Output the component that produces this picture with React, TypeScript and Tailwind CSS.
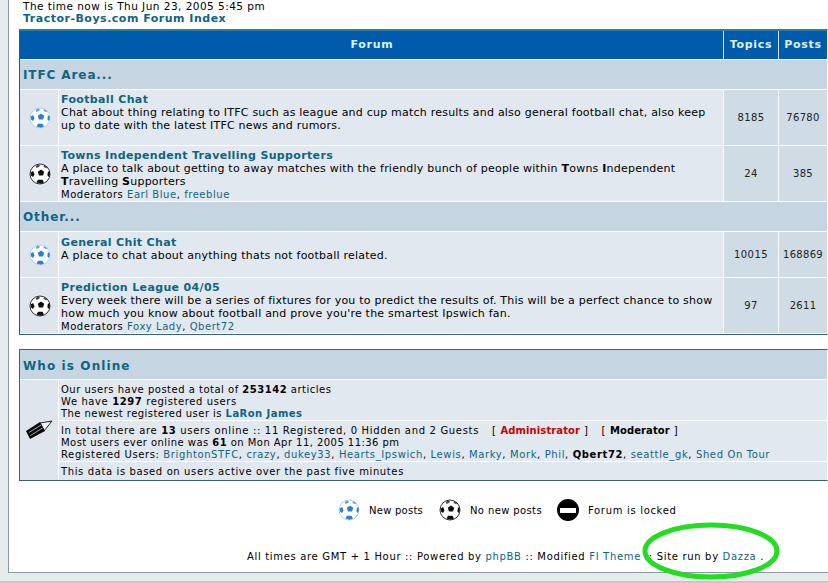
import React from "react";

const teal = "text-[#0e6583]";

function Ball({ blue = false }: { blue?: boolean }) {
  const c = blue ? "#2f80cc" : "#0c0c0c";
  return (
    <svg width="22" height="22" viewBox="0 0 22 22">
      <circle cx="11" cy="11" r="10" fill="#fff" stroke={blue ? "#b4d4ee" : "#333"} strokeWidth="1" />
      <path d="M12 6.500l3.200 2.300-1.200 3.800h-4l-1.200-3.800z" fill={c} />
      <path d="M8.500 1.600l2.500 0.600-1 1.800-2.600 1-0.600-1.800z" fill={c} opacity="0.75" />
      <path d="M15 2l3 2.200-0.500 1-3-1.200z" fill={c} opacity="0.75" />
      <path d="M1.600 9.500l2.600-1.500 1.300 3.500-1.500 2.500-2-1.500z" fill={c} />
      <path d="M20.600 9l-1.600-0.800-0.600 3.800 1 2 1.400-2z" fill={c} />
      <path d="M7.500 19.500l1.500-2.700h4.500l1.500 2.700-3.500 1.300z" fill={c} />
    </svg>
  );
}

function Pencil() {
  return (
    <svg width="28" height="20" viewBox="0 0 28 20">
      <path d="M15 3L27 1l-8 10z" fill="#f2f5f7" stroke="#222" strokeWidth="1" />
      <path d="M1 11L15 2l5 9-15 8z" fill="#0a0a0a" />
      <path d="M4 12.500l12-7.500M5.500 15.500l12-7.500" stroke="#dfe6ec" strokeWidth="0.700" />
    </svg>
  );
}

function A({ children }: { children: React.ReactNode }) {
  return <span className={teal}>{children}</span>;
}

function ForumRow({
  blue,
  title,
  h,
  pad = "pt-[3px]",
  topics,
  posts,
  children,
}: {
  blue?: boolean;
  title: string;
  h: string;
  pad?: string;
  topics: string;
  posts: string;
  children: React.ReactNode;
}) {
  return (
    <div className={`flex ${h} border-b border-white`}>
      <div className="w-[39px] flex items-center justify-center bg-[#dee5ec] border-r border-white shrink-0 pl-px">
        <Ball blue={blue} />
      </div>
      <div className={`w-[665px] shrink-0 bg-[#e2e8ef] border-r border-white pl-[2px] pr-[5px] ${pad} leading-[13px] tracking-[0.22px]`}>
        <div className={`font-bold text-[11px] tracking-[0.35px] ${teal} leading-[13px]`}>{title}</div>
        {children}
      </div>
      <div className="w-[55px] shrink-0 bg-[#cfdbe5] border-r border-white flex items-center justify-center text-[10px] tracking-[0.4px] text-[#222]">
        {topics}
      </div>
      <div className="flex-1 bg-[#cfdbe5] flex items-center justify-center text-[10px] tracking-[0.3px] text-[#222]">
        {posts}
      </div>
    </div>
  );
}

function Category({ label }: { label: string }) {
  return (
    <div className={`h-[30px] bg-[#c5d5e2] border-b border-white flex items-center pl-[3px] font-bold text-[12px] tracking-[0.9px] ${teal}`}>
      {label}
    </div>
  );
}

export default function App() {
  return (
    <div className="relative w-[828px] h-[583px] overflow-hidden bg-[#e6ecee] text-[11px] text-black font-['DejaVu_Sans',Verdana,sans-serif]">
      <div className="ml-2 h-[573px] bg-white border-l border-b border-[#8a9ba3] pl-[10px]">
        <div className="pl-[4px] text-[10.500px] tracking-[0.47px] leading-[13px]">
          The time now is Thu Jun 23, 2005 5:45 pm
        </div>
        <div className={`pl-[4px] font-bold text-[11px] tracking-[0.5px] leading-[12px] ${teal}`}>
          Tractor-Boys.com Forum Index
        </div>

        <div className="mt-[4px] border border-[#0e6583] border-t-[2px] border-t-[#2a7f9f] border-b-[#35617a] border-r-white w-[809px]">
          <div className="flex h-[29px] bg-[#005bac] border-b border-white font-bold text-[11px] tracking-[0.7px] text-[#ddf0f8]">
            <div className="w-[704px] shrink-0 border-r border-[#cfe7f0] flex items-center justify-center pl-px">Forum</div>
            <div className="w-[55px] shrink-0 border-r border-[#cfe7f0] flex items-center justify-center">Topics</div>
            <div className="flex-1 flex items-center justify-center">Posts</div>
          </div>
          <Category label="ITFC Area..." />
          <ForumRow blue title="Football Chat" h="h-[56px]" topics="8185" posts="76780">
            <div>Chat about thing relating to ITFC such as league and cup match results and also general football chat, also keep up to date with the latest ITFC news and rumors.</div>
          </ForumRow>
          <ForumRow title="Towns Independent Travelling Supporters" h="h-[56px]" topics="24" posts="385">
            <div>
              A place to talk about getting to away matches with the friendly bunch of people within <b>T</b>owns <b>I</b>ndependent <b>T</b>ravelling <b>S</b>upporters
            </div>
            <div className="text-[10px] tracking-[0.55px]">
              Moderators <A>Earl Blue</A>, <A>freeblue</A>
            </div>
          </ForumRow>
          <Category label="Other..." />
          <ForumRow blue title="General Chit Chat" h="h-[46px]" pad="pt-[4px]" topics="10015" posts="168869">
            <div>A place to chat about anything thats not football related.</div>
          </ForumRow>
          <ForumRow title="Prediction League 04/05" h="h-[56px]" topics="97" posts="2611">
            <div>Every week there will be a series of fixtures for you to predict the results of. This will be a perfect chance to show how much you know about football and prove you're the smartest Ipswich fan.</div>
            <div className="text-[10px] tracking-[0.55px]">
              Moderators <A>Foxy Lady</A>, <A>Qbert72</A>
            </div>
          </ForumRow>
        </div>

        <div className="mt-[14px] border border-[#35617a] border-r-white w-[809px]">
          <div className={`h-[30px] bg-[#c5d5e2] border-b border-white flex items-center pl-[3px] pt-[2px] font-bold text-[12px] tracking-[1.100px] ${teal}`}>
            Who is Online
          </div>
          <div className="flex bg-[#e2e8ef] text-[10px] tracking-[0.45px] leading-[12px]">
            <div className="w-[39px] shrink-0 bg-[#dee5ec] border-r border-white flex items-center justify-center">
              <Pencil />
            </div>
            <div className="flex-1">
              <div className="h-[41px] pl-[2px] pt-[4px] border-b border-white">
                <div className="tracking-[0.5px]">Our users have posted a total of <b>253142</b> articles</div>
                <div className="tracking-[0.6px]">We have <b>1297</b> registered users</div>
                <div>The newest registered user is <b className={teal}>LaRon James</b></div>
              </div>
              <div className="h-[41px] pl-[2px] pt-[4px] border-b border-white whitespace-nowrap">
                <div className="tracking-[0.67px]">
                  In total there are <b>13</b> users online :: 11 Registered, 0 Hidden and 2 Guests
                  <span className="ml-[13px]">[ <b className="text-[#cc0000] tracking-[0.1px]">Administrator</b> ]</span>
                  <span className="ml-[13px]">[ <b className="tracking-[0.1px]">Moderator</b> ]</span>
                </div>
                <div>Most users ever online was <b>61</b> on Mon Apr 11, 2005 11:36 pm</div>
                <div className="tracking-[0.62px]">
                  Registered Users: <A>BrightonSTFC</A>, <A>crazy</A>, <A>dukey33</A>, <A>Hearts_Ipswich</A>, <A>Lewis</A>, <A>Marky</A>, <A>Mork</A>, <A>Phil</A>, <b>Qbert72</b>, <A>seattle_gk</A>, <A>Shed On Tour</A>
                </div>
              </div>
              <div className="h-[18px] pl-[2px] pt-[4px] tracking-[0.62px]">This data is based on users active over the past five minutes</div>
            </div>
          </div>
        </div>

        <div className="mt-[18px] flex items-center text-[10px] pl-[319px] h-[22px] whitespace-nowrap">
          <div className="flex items-center gap-[9px] w-[101px] tracking-[0.25px]"><Ball blue /><span>New posts</span></div>
          <div className="flex items-center gap-[9px] w-[118px] tracking-[0.38px]"><Ball /><span>No new posts</span></div>
          <div className="flex items-center gap-[9px] tracking-[0.68px]">
            <span className="w-[22px] h-[22px] rounded-full bg-black flex items-center justify-center">
              <span className="block w-[16px] h-[5px] bg-white"></span>
            </span>
            <span>Forum is locked</span>
          </div>
        </div>

        <div className="mt-[30px] pl-[228px] text-[10px] tracking-[0.67px] leading-[12px] whitespace-nowrap">
          All times are GMT + 1 Hour :: Powered by <A>phpBB</A> :: Modified <A>FI Theme</A> :: Site run by <A>Dazza</A> .
        </div>
      </div>
      <div className="mt-[8px] h-[2px] bg-[#c2caca]"></div>

      <svg className="absolute left-[640px] top-[520px]" width="144" height="62" viewBox="0 0 144 62">
        <ellipse cx="71" cy="31" rx="66" ry="26" fill="none" stroke="#22dd22" strokeWidth="5" />
      </svg>
    </div>
  );
}
